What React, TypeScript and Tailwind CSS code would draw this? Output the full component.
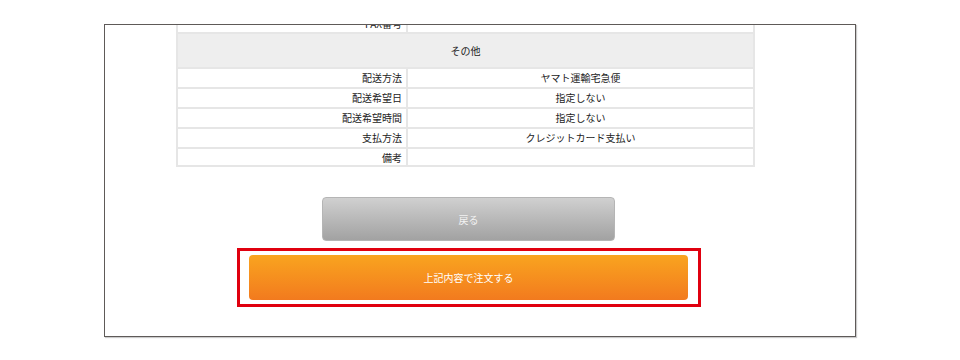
import React from "react";

const rows: [string, string][] = [
  ["配送方法", "ヤマト運輸宅急便"],
  ["配送希望日", "指定しない"],
  ["配送希望時間", "指定しない"],
  ["支払方法", "クレジットカード支払い"],
  ["備考", ""],
];

export default function App() {
  return (
    <div
      className="w-[960px] h-[360px] bg-white pt-[24px] pl-[104px]"
      style={{ fontFamily: '"Noto Sans CJK JP", "Noto Sans", sans-serif' }}
    >
      <div className="w-[752px] h-[313px] border border-[#5e5a58] overflow-hidden shadow-[1px_1px_1px_rgba(0,0,0,0.2)]">
        <div className="ml-[71px] mt-[-11px] w-[579px] border-x-2 border-b-2 border-[#e6e6e6] text-[10px] text-[#222]">
          <div className="flex h-[20px] border-b-2 border-[#e6e6e6]">
            <div className="w-[230px] pr-[4px] text-right leading-[20px] border-r-2 border-[#e6e6e6]">FAX番号</div>
            <div className="flex-1" />
          </div>
          <div className="h-[35px] bg-[#eeeeee] border-b-2 border-[#e6e6e6] flex items-center justify-center">
            その他
          </div>
          {rows.map(([k, v], i) => (
            <div
              key={k}
              className={`flex ${i < rows.length - 1 ? "h-[20px] border-b-2 border-[#e6e6e6]" : "h-[16px]"}`}
            >
              <div className="w-[230px] pr-[4px] text-right leading-[18px] border-r-2 border-[#e6e6e6]">{k}</div>
              <div className="flex-1 text-center leading-[18px]">{v}</div>
            </div>
          ))}
        </div>
        <div className="mt-[30px] ml-[217px] w-[293px] h-[44px] rounded-[4px] border border-[#b5b5b5] bg-gradient-to-b from-[#d0d0d0] to-[#a2a2a2] flex items-center justify-center text-[10px] text-[#f2f2f2]">
          戻る
        </div>
        <div className="mt-[7px] ml-[132px] w-[464px] h-[59px] border-[3px] border-[#e0000f] pl-[9px] pr-[10px] pt-[4px]">
          <div className="h-[45px] rounded-[4px] bg-gradient-to-b from-[#f9a41f] to-[#f27a1e] flex items-center justify-center text-[10px] text-white">
            上記内容で注文する
          </div>
        </div>
      </div>
    </div>
  );
}
